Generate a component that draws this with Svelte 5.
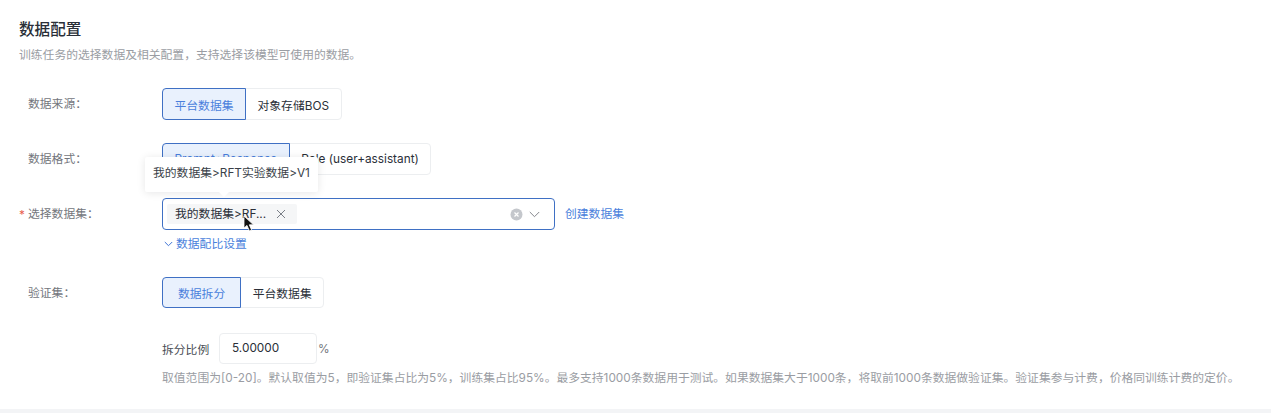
<script lang="ts">
  const sources = ['平台数据集', '对象存储BOS'];
  const formats = ['Prompt+Response', 'Role (user+assistant)'];
  const validation = ['数据拆分', '平台数据集'];
</script>

<div class="page">
  <h2 class="title">数据配置</h2>
  <p class="desc">训练任务的选择数据及相关配置，支持选择该模型可使用的数据。</p>

  <div class="row source">
    <div class="label">数据来源：</div>
    <div class="group">
      {#each sources as item, i}
        <button class="seg" class:active={i === 0}>{item}</button>
      {/each}
    </div>
  </div>

  <div class="row format">
    <div class="label">数据格式：</div>
    <div class="group">
      {#each formats as item, i}
        <button class="seg" class:active={i === 0}>{item}</button>
      {/each}
    </div>
  </div>

  <div class="row dataset">
    <div class="label"><span class="star">*</span>选择数据集：</div>
    <div class="control">
      <div class="line">
        <div class="select">
          <div class="tooltip">我的数据集&gt;RFT实验数据&gt;V1</div>
          <span class="tag">
            <span>我的数据集&gt;RF...</span>
            <svg width="10" height="10" viewBox="0 0 10 10"><path d="M1 1l8 8M9 1L1 9" stroke="#7a7f87" stroke-width="1" fill="none" /></svg>
          </span>
          <svg class="cursor" width="12" height="17" viewBox="0 0 12 17"><path d="M1 1v12l3-2.6L6.4 16l2.2-1-2.3-5.2H10.500z" fill="#111" stroke="#fff" stroke-width="0.8" /></svg>
          <span class="icons">
            <svg width="13" height="13" viewBox="0 0 13 13"><circle cx="6.500" cy="6.500" r="6" fill="#c4c7cc" /><path d="M4.500 4.500l4 4M8.500 4.500l-4 4" stroke="#fff" stroke-width="1.200" /></svg>
            <svg width="11" height="7" viewBox="0 0 11 7"><path d="M0.800 1l4.700 4.700L10.200 1" stroke="#84868c" stroke-width="1" fill="none" /></svg>
          </span>
        </div>
        <a class="link" href="#create">创建数据集</a>
      </div>
      <div class="ratio">
        <svg width="9" height="6" viewBox="0 0 9 6"><path d="M0.800 1l3.700 3.700L8.200 1" stroke="#3f74d6" stroke-width="1" fill="none" /></svg>
        <span>数据配比设置</span>
      </div>
    </div>
  </div>

  <div class="row validate">
    <div class="label">验证集：</div>
    <div class="group">
      {#each validation as item, i}
        <button class="seg" class:active={i === 0} class:wide={i === 0}>{item}</button>
      {/each}
    </div>
  </div>

  <div class="row split">
    <div class="label"></div>
    <div class="control">
      <div class="split-line">
        <span class="split-label">拆分比例</span>
        <div class="input">5.00000</div>
        <span class="unit">%</span>
      </div>
      <p class="hint">取值范围为[0-20]。默认取值为5，即验证集占比为5%，训练集占比95%。最多支持1000条数据用于测试。如果数据集大于1000条，将取前1000条数据做验证集。验证集参与计费，价格同训练计费的定价。</p>
    </div>
  </div>
</div>
<div class="band"></div>

<style>
  :global(body) {
    margin: 0;
    background: #fff;
    font-family: Inter, "Noto Sans CJK SC", sans-serif;
    color: #2a2f38;
  }

  .page {
    height: 409px;
    box-sizing: border-box;
    padding: 20px 19px 0;
    overflow: hidden;
  }

  .band {
    height: 4px;
    background: #f3f4f6;
  }

  .title {
    margin: 0;
    font-size: 15.6px;
    line-height: 20px;
    font-weight: 500;
    color: #2a2f38;
  }

  .desc {
    margin: 6px 0 0;
    font-size: 11.8px;
    line-height: 18px;
    color: #9a9da3;
  }

  .row {
    display: flex;
    align-items: flex-start;
  }

  .source { margin-top: 24px; }
  .format { margin-top: 23px; }
  .dataset { margin-top: 23px; }
  .validate { margin-top: 24px; }
  .split { margin-top: 24px; }

  .label {
    position: relative;
    flex: none;
    width: 134px;
    padding-left: 9px;
    font-size: 11.8px;
    line-height: 32px;
    color: #73767c;
  }

  .star {
    position: absolute;
    left: 0;
    top: 1px;
    color: #e8604f;
  }

  .group {
    display: flex;
  }

  .seg {
    height: 32px;
    box-sizing: border-box;
    padding: 0 11.500px;
    margin-left: -1px;
    border: 1px solid #eceef0;
    background: #fff;
    font: inherit;
    font-size: 11.8px;
    color: #2a2f38;
  }

  .seg:first-child {
    margin-left: 0;
    border-radius: 4px 0 0 4px;
  }

  .seg:last-child {
    border-radius: 0 4px 4px 0;
  }

  .seg.active {
    position: relative;
    background: #e9f1fd;
    border-color: #3f70c4;
    color: #4a7fdc;
  }

  .seg.wide {
    padding: 0 15px;
  }

  .validate .seg {
    height: 31px;
  }

  .control {
    display: flex;
    flex-direction: column;
  }

  .line {
    display: flex;
    align-items: center;
    gap: 10px;
  }

  .select {
    position: relative;
    display: flex;
    align-items: center;
    width: 393px;
    height: 32px;
    box-sizing: border-box;
    padding: 0 14px 0 4px;
    border: 1px solid #3f70c4;
    border-radius: 4px;
    background: #fff;
  }

  .tag {
    display: flex;
    align-items: center;
    gap: 10px;
    height: 20px;
    padding: 0 11px 0 8px;
    border-radius: 2px;
    background: #f5f6f7;
    font-size: 11.8px;
    line-height: 18px;
    color: #2a2f38;
  }

  .tag > span {
    margin-top: -1px;
  }

  .cursor {
    position: absolute;
    left: 80px;
    top: 16px;
  }

  .icons {
    display: flex;
    align-items: center;
    gap: 6px;
    margin-left: auto;
  }

  .tooltip {
    position: absolute;
    left: -18px;
    top: -42px;
    height: 35px;
    padding: 0 8px;
    background: #fff;
    border-radius: 2px;
    box-shadow: 0 1px 8px rgba(7, 12, 20, 0.1);
    font-size: 11.8px;
    line-height: 33px;
    white-space: nowrap;
    color: #3a3f48;
  }

  .tooltip::after {
    content: '';
    position: absolute;
    left: 74px;
    bottom: -5px;
    border-left: 5px solid transparent;
    border-right: 5px solid transparent;
    border-top: 5px solid #fff;
  }

  .link {
    margin-top: -3px;
    font-size: 11.8px;
    color: #4a7fdc;
    text-decoration: none;
  }

  .ratio {
    display: flex;
    align-items: center;
    gap: 3px;
    margin: 5px 0 0 2px;
    font-size: 11.8px;
    line-height: 18px;
    color: #4a7fdc;
  }

  .split-line {
    display: flex;
    align-items: center;
    height: 31px;
  }

  .split-label {
    width: 57px;
    font-size: 11.8px;
    color: #4a4e56;
  }

  .input {
    width: 98px;
    height: 31px;
    box-sizing: border-box;
    padding-left: 12px;
    border: 1px solid #eceef0;
    border-radius: 4px;
    font-size: 11.8px;
    line-height: 29px;
    color: #2a2f38;
  }

  .unit {
    margin-left: 1px;
    font-size: 11.8px;
    color: #73767c;
  }

  .hint {
    margin: 5px 0 0;
    font-size: 11.8px;
    line-height: 18px;
    white-space: nowrap;
    color: #9a9da3;
  }
</style>
